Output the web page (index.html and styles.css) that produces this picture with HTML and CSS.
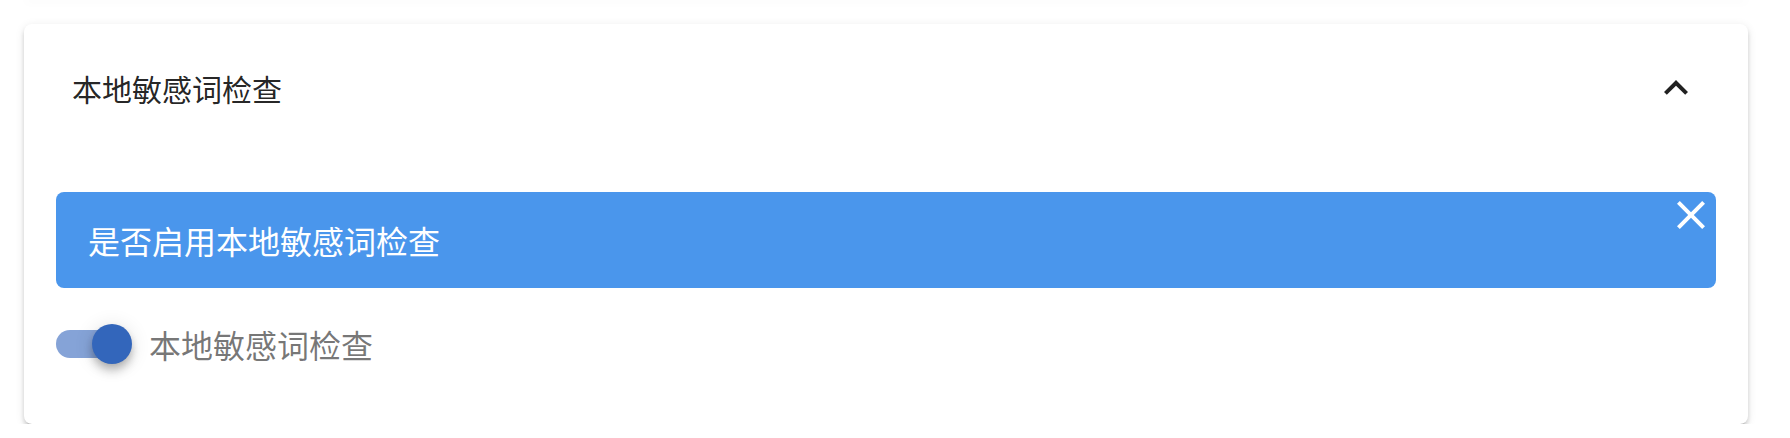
FILE: index.html
```html
<!DOCTYPE html>
<html lang="zh-CN">
<head>
<meta charset="utf-8">
<title>本地敏感词检查</title>
<link rel="stylesheet" href="styles.css">
</head>
<body>
<div class="panels">
  <div class="prev-panel"></div>
  <section class="panel">
    <header class="panel-header">
      <span class="panel-title">本地敏感词检查</span>
      <svg class="chevron" viewBox="0 0 24 24" width="48" height="48"><path d="M7.41,15.41L12,10.83L16.59,15.41L18,14L12,8L6,14L7.41,15.41Z"/></svg>
    </header>
    <div class="panel-content">
      <div class="alert">
        <span class="alert-text">是否启用本地敏感词检查</span>
        <svg class="alert-close" viewBox="0 0 24 24" width="48" height="48"><path d="M19,6.41L17.59,5L12,10.59L6.41,5L5,6.41L10.59,12L5,17.59L6.41,19L12,13.41L17.59,19L19,17.59L13.41,12L19,6.41Z"/></svg>
      </div>
      <div class="switch-row">
        <div class="switch">
          <div class="switch-track"></div>
          <div class="switch-thumb"></div>
        </div>
        <span class="switch-label">本地敏感词检查</span>
      </div>
    </div>
  </section>
</div>
</body>
</html>
```
FILE: styles.css
```css
html, body {
  margin: 0;
  padding: 0;
  background: #ffffff;
}
body {
  font-family: "Noto Sans CJK SC", "Noto Sans", Roboto, sans-serif;
}
.panels {
  padding: 0 42px 0 24px;
}
.prev-panel {
  height: 2px;
  margin-top: -2px;
  background: #fff;
  border-radius: 0 0 8px 8px;
  box-shadow: 0 2px 8px 0 rgba(0,0,0,.05);
}
.panel {
  margin-top: 24px;
  height: 400px;
  box-sizing: border-box;
  background: #fff;
  border-radius: 8px;
  box-shadow: 0 6px 2px -4px rgba(0,0,0,.24), 0 4px 4px 0 rgba(0,0,0,.14), 0 2px 10px 0 rgba(0,0,0,.1);
}
.panel-header {
  height: 128px;
  padding: 0 48px;
  display: flex;
  align-items: center;
  justify-content: space-between;
}
.panel-title {
  font-size: 30px;
  line-height: 40px;
  color: rgba(0,0,0,.87);
}
.chevron {
  fill: rgba(0,0,0,.87);
  display: block;
}
.panel-content {
  padding: 40px 32px 32px;
}
.alert {
  position: relative;
  height: 96px;
  box-sizing: border-box;
  padding: 0 32px;
  display: flex;
  align-items: center;
  background: #4a96ec;
  border-radius: 8px;
  color: #fff;
}
.alert-text {
  font-size: 32px;
  line-height: 48px;
}
.alert-close {
  position: absolute;
  top: -1px;
  right: 1px;
  fill: #fff;
}
.switch-row {
  margin-top: 32px;
  height: 48px;
  display: flex;
  align-items: center;
}
.switch {
  position: relative;
  width: 76px;
  height: 40px;
  flex: none;
}
.switch-track {
  margin-top: 6px;
  width: 72px;
  height: 28px;
  border-radius: 14px;
  background: #85a3d7;
}
.switch-thumb {
  position: absolute;
  top: 0;
  right: 0;
  width: 40px;
  height: 40px;
  border-radius: 50%;
  background: #3366bb;
  box-shadow: 0 4px 8px -2px rgba(0,0,0,.2), 0 8px 10px 0 rgba(0,0,0,.14), 0 2px 20px 0 rgba(0,0,0,.12);
}
.switch-label {
  margin-left: 17px;
  font-size: 32px;
  line-height: 48px;
  color: rgba(0,0,0,.54);
}
```
